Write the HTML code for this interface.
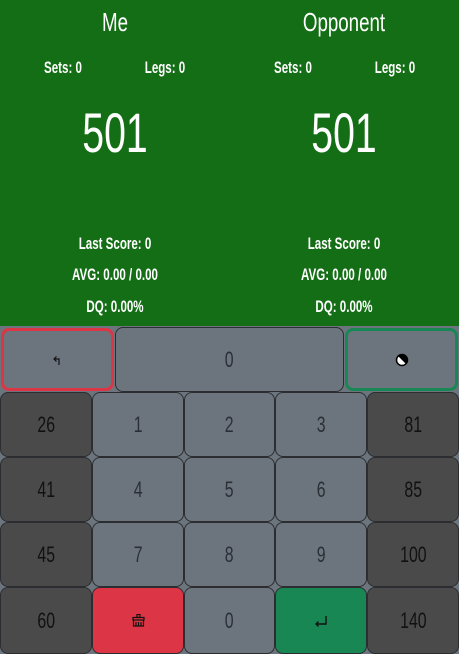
<!DOCTYPE html>
<html><head><style>
*{margin:0;padding:0;box-sizing:border-box}
body{width:459px;height:654px;overflow:hidden;background:#6c757d;font-family:"Liberation Sans",sans-serif;position:relative}
.top{position:absolute;left:0;top:0;width:459px;height:326px;background:#146e16;color:#fff}
.t{position:absolute;transform:translateX(-50%) scaleX(0.72);white-space:nowrap;line-height:1}
.name{font-size:26px;top:9px}
.sm{font-size:17px;font-weight:bold;transform:translateX(-50%) scaleX(0.68)}
.big{font-size:56px;top:105px;transform:translateX(-50%) scaleX(0.7)}
.b{position:absolute;border:1px solid #2b2d30;border-radius:8px;background:#6c757d;color:#2b2f35;font-size:22px;display:flex;align-items:center;justify-content:center}
.b span{display:inline-block;transform:scaleX(0.72)}
.d{background:#4a4a4a;color:#111}
</style></head><body>
<div class="top">
<div class="t name" style="left:115px">Me</div>
<div class="t name" style="left:344px">Opponent</div>
<div class="t sm" style="left:63px;top:59px">Sets: 0</div>
<div class="t sm" style="left:165px;top:59px">Legs: 0</div>
<div class="t sm" style="left:293px;top:59px">Sets: 0</div>
<div class="t sm" style="left:395px;top:59px">Legs: 0</div>
<div class="t big" style="left:115px">501</div>
<div class="t big" style="left:344px">501</div>
<div class="t sm" style="left:115px;top:235px">Last Score: 0</div>
<div class="t sm" style="left:344px;top:235px">Last Score: 0</div>
<div class="t sm" style="left:115px;top:266px">AVG: 0.00 / 0.00</div>
<div class="t sm" style="left:344px;top:266px">AVG: 0.00 / 0.00</div>
<div class="t sm" style="left:115px;top:298px">DQ: 0.00%</div>
<div class="t sm" style="left:344px;top:298px">DQ: 0.00%</div>
</div>
<div class="b" style="left:1px;top:328px;width:113px;height:63px;border:3px solid #dc3545;color:#111">
<svg width="12" height="12" viewBox="0 0 12 12" fill="none" stroke="#111" stroke-width="1.2"><path d="M7 11V5H2M4.5 2.5 2 5l2.5 2.5"/></svg></div>
<div class="b" style="left:115px;top:327px;width:229px;height:65px"><span>0</span></div>
<div class="b" style="left:345px;top:328px;width:113px;height:63px;border:3px solid #198754">
<svg width="14" height="14" viewBox="0 0 14 14"><circle cx="7" cy="7" r="5.5" fill="#fff" stroke="#000" stroke-width="1.5"/><path d="M3 3 L11 11 A5.5 5.5 0 0 0 3 3Z" fill="#000"/></svg></div>

<div class="b d" style="left:0;top:392px;width:92px;height:65px"><span>26</span></div>
<div class="b" style="left:92px;top:392px;width:92px;height:65px"><span>1</span></div>
<div class="b" style="left:184px;top:392px;width:91px;height:65px"><span>2</span></div>
<div class="b" style="left:275px;top:392px;width:92px;height:65px"><span>3</span></div>
<div class="b d" style="left:367px;top:392px;width:92px;height:65px"><span>81</span></div>

<div class="b d" style="left:0;top:457px;width:92px;height:65px"><span>41</span></div>
<div class="b" style="left:92px;top:457px;width:92px;height:65px"><span>4</span></div>
<div class="b" style="left:184px;top:457px;width:91px;height:65px"><span>5</span></div>
<div class="b" style="left:275px;top:457px;width:92px;height:65px"><span>6</span></div>
<div class="b d" style="left:367px;top:457px;width:92px;height:65px"><span>85</span></div>

<div class="b d" style="left:0;top:522px;width:92px;height:65px"><span>45</span></div>
<div class="b" style="left:92px;top:522px;width:92px;height:65px"><span>7</span></div>
<div class="b" style="left:184px;top:522px;width:91px;height:65px"><span>8</span></div>
<div class="b" style="left:275px;top:522px;width:92px;height:65px"><span>9</span></div>
<div class="b d" style="left:367px;top:522px;width:92px;height:65px"><span>100</span></div>

<div class="b d" style="left:0;top:587px;width:92px;height:67px"><span>60</span></div>
<div class="b" style="left:92px;top:587px;width:92px;height:67px;background:#dc3545">
<svg width="13" height="13" viewBox="0 0 13 13" fill="none" stroke="#111" stroke-width="1.2"><rect x="5" y="0.5" width="3" height="3"/><rect x="1" y="3.5" width="11" height="2.5"/><path d="M1.5 6v6h10v-6M4 8v4M6.5 8v4M9 8v4"/></svg></div>
<div class="b" style="left:184px;top:587px;width:91px;height:67px"><span>0</span></div>
<div class="b" style="left:275px;top:587px;width:92px;height:67px;background:#198754">
<svg width="14" height="12" viewBox="0 0 14 12" fill="none" stroke="#111" stroke-width="1.4"><path d="M12 1v8H2M4.5 6.5 2 9l2.5 2.5"/></svg></div>
<div class="b d" style="left:367px;top:587px;width:92px;height:67px"><span>140</span></div>
</body></html>
